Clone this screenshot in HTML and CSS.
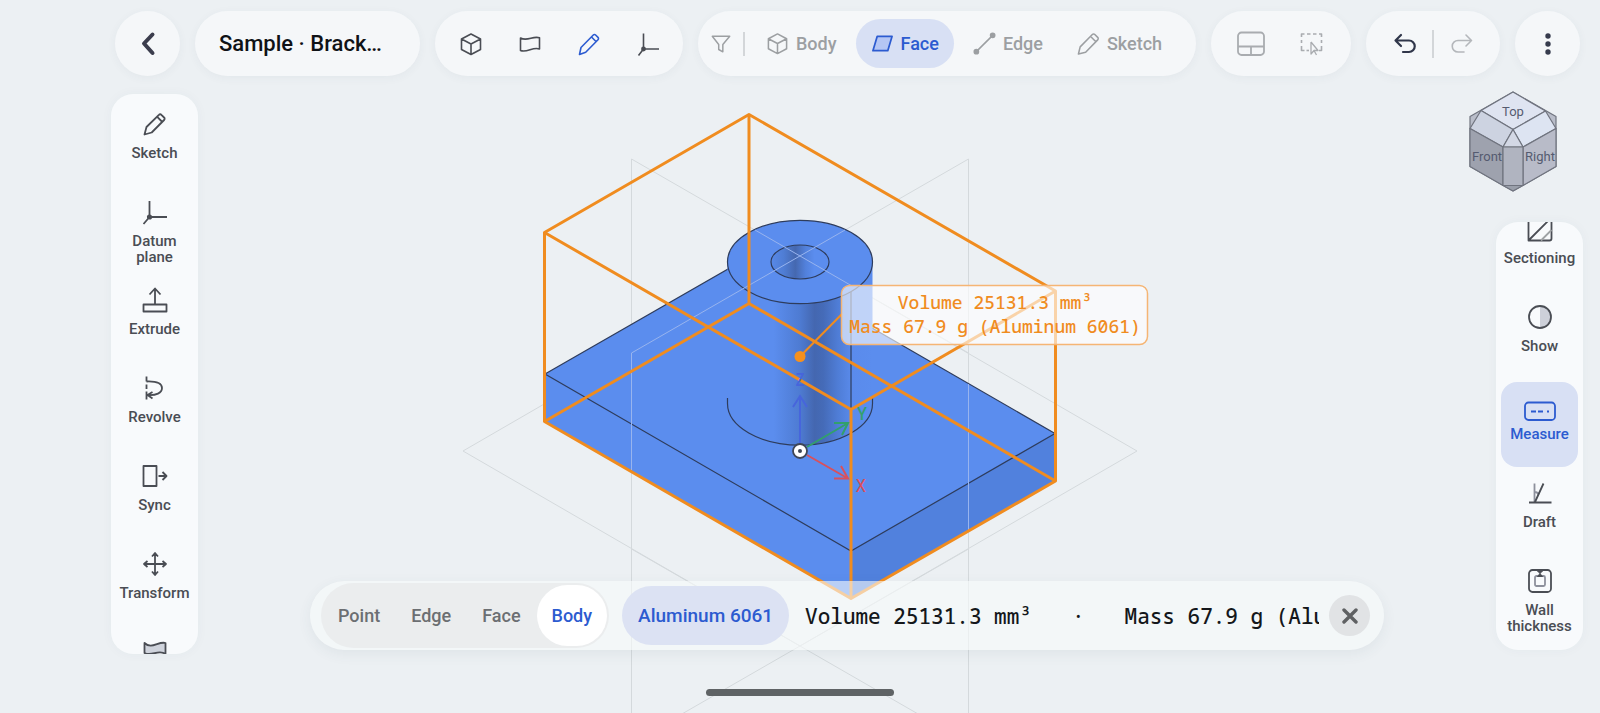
FILE: index.html
```html
<!DOCTYPE html>
<html lang="en">
<head>
<meta charset="utf-8">
<title>Sample · Bracket</title>
<meta name="viewport" content="width=device-width, initial-scale=1">
<link rel="stylesheet" href="styles.css">
</head>
<body>
<div class="app">

  <svg class="scene" viewBox="0 0 1600 713" preserveAspectRatio="xMidYMin slice" role="img" aria-label="Bracket model with bounding box">
    <defs>
      <linearGradient id="shaft" gradientUnits="userSpaceOnUse" x1="727" y1="0" x2="873" y2="0">
        <stop offset="0" stop-color="#5b8dee"/>
        <stop offset=".32" stop-color="#5b8dee"/>
        <stop offset=".5" stop-color="#4e7bd2"/>
        <stop offset=".6" stop-color="#4467b0"/>
        <stop offset=".66" stop-color="#456bb8"/>
        <stop offset=".76" stop-color="#4f7dd6"/>
        <stop offset=".86" stop-color="#5a8bec"/>
        <stop offset="1" stop-color="#5b8dee"/>
      </linearGradient>
      <linearGradient id="bore" gradientUnits="userSpaceOnUse" x1="771" y1="0" x2="829" y2="0">
        <stop offset="0" stop-color="#5889e8"/>
        <stop offset=".22" stop-color="#4f7dd4"/>
        <stop offset=".42" stop-color="#4568b0"/>
        <stop offset=".6" stop-color="#5281dc"/>
        <stop offset=".75" stop-color="#5b8dee"/>
        <stop offset="1" stop-color="#5b8dee"/>
      </linearGradient>
    </defs>

    <g class="plane">
      <path d="M463 451 800 256 1137 451 800 646Z"/>
      <path d="M631.500 159V743L968.500 549V159L631.500 353M631.500 159 968.500 353V743L631.500 549"/>
    </g>

    <path fill="#5b8dee" d="M545 374 749 257 1055 433.500V481L851 598.500 545 421Z"/>
    <path fill="#5181dd" d="M851 551 1055 433.500V481L851 598.500Z"/>
    <path class="edge" d="M545 374 749 257 1055 433.500 851 551ZM851 551V598"/>
    <path fill="url(#shaft)" d="M727.500 262V403.500A72.500 41.700 0 0 0 872.500 403.500V262Z"/>
    <path class="edge" d="M727.500 398V403.500A72.500 41.700 0 0 0 872.500 403.500V398"/>
    <ellipse class="edge cap" cx="800" cy="262" rx="72.500" ry="41.700"/>
    <ellipse class="edge bore" cx="800" cy="262" rx="29" ry="17"/>
    <path class="edge" d="M851 292V410"/>
    <path class="plane-over" d="M631.500 470V353L845 230M755 230 852 286M968.500 384V531"/>

    <g class="bounds">
      <path d="M749 114.500 1055.500 291V481L851 598.500 544.500 421.500V232.500Z"/>
      <path d="M544.500 232.500 851 409.500 1055.500 291M851 409.500V598.500M749 114.500V303.500M544.500 421.500 749 303.500 1055.500 481"/>
    </g>

    <g class="axis axis-z"><path d="M800 444V397M793 407l7-11 7 11"/><text x="800" y="386">Z</text></g>
    <g class="axis axis-y"><path d="M807 447 848 423M834 423l14 0-6 12"/><text x="862" y="420">Y</text></g>
    <g class="axis axis-x"><path d="M807 455 848 478.500M841 466l7 12.500-14 0"/><text x="861" y="492">X</text></g>
    <circle cx="800" cy="451" r="7" fill="#fff" stroke="#3f4656" stroke-width="1.800"/>
    <circle cx="800" cy="451" r="2" fill="#3f4656"/>

    <path d="M800 356.500 842 314" stroke="#f08c1f" stroke-width="2"/>
    <circle cx="800" cy="356.500" r="5.500" fill="#f5901e"/>
    <rect class="callout-box" x="841.500" y="285.500" width="306" height="59" rx="8"/>
    <text class="callout" x="995" y="309">Volume 25131.3 mm³</text>
    <text class="callout" x="995" y="333">Mass 67.9 g (Aluminum 6061)</text>
  </svg>

  <header class="topbar">
    <button class="pill round" aria-label="Back">
      <svg width="24" height="28" viewBox="0 0 24 28"><path d="M16.500 4.500 8 13.500l8.500 9.500" fill="none" stroke="#3b3d4d" stroke-width="4" stroke-linecap="round" stroke-linejoin="round"/></svg>
    </button>
    <h1 class="pill title">Sample · Brack…</h1>
    <nav class="pill tools" aria-label="Modes">
      <button aria-label="Solid"><svg class="ico" viewBox="0 0 24 24"><path d="M12 2 21.500 7v10.500L12 22.500 2.500 17.500V7ZM2.500 7 12 12l9.500-5M12 12v10.500"/></svg></button>
      <button aria-label="Surface"><svg class="ico" viewBox="0 0 24 24"><path d="M2.500 6c6.500 4 12.500-2.500 19-.2V17c-6.500-2.500-12.500 4-19 1.500Z"/></svg></button>
      <button class="on" aria-label="Sketch"><svg class="ico" viewBox="0 0 24 24"><path d="M2.500 22.500 4 15.500 16.300 3a1.600 1.600 0 0 1 2.300 0l2.400 2.400a1.600 1.600 0 0 1 0 2.300L8.700 20.200ZM14.500 5l4.700 4.700"/></svg></button>
      <button aria-label="Datum"><svg class="ico" viewBox="0 0 24 24"><path d="M7.500 1.500V17H23M7.500 17l-5 6.500"/><circle cx="7.500" cy="17" r="1.600" fill="currentColor"/></svg></button>
    </nav>
    <div class="pill filter" role="group" aria-label="Selection filter">
      <svg class="ico funnel" viewBox="0 0 24 24"><path d="M2.500 3.500h19l-7.500 9v8l-4.500-2.500v-5.500Z"/></svg>
      <span class="rule"></span>
      <button><svg class="ico" viewBox="0 0 24 24"><path d="M12 2 21.500 7v10.500L12 22.500 2.500 17.500V7ZM2.500 7 12 12l9.500-5M12 12v10.500"/></svg>Body</button>
      <button class="on" aria-pressed="true"><svg class="ico" viewBox="0 0 24 24"><path d="M6.500 4.500H22L17.500 19.500H2Z" fill="#b5c6f4" stroke-width="1.800"/></svg>Face</button>
      <button><svg class="ico" viewBox="0 0 24 24"><path d="M4 20 20 4"/><circle cx="3.500" cy="20.500" r="2.200" fill="currentColor"/><circle cx="20.500" cy="3.500" r="2.200" fill="currentColor"/></svg>Edge</button>
      <button><svg class="ico" viewBox="0 0 24 24"><path d="M1.500 23 3.300 15.500 16 2.600a1.800 1.800 0 0 1 2.600 0l3 3a1.800 1.800 0 0 1 0 2.600L9 21.200ZM14 4.500l5.700 5.700"/></svg>Sketch</button>
    </div>
    <div class="pill views">
      <button aria-label="Layout"><svg width="30" height="26" viewBox="0 0 30 26"><path d="M5.500 1.500h19a3.500 3.500 0 0 1 3.500 3.500v15.500a3.500 3.500 0 0 1-3.500 3.500h-19A3.500 3.500 0 0 1 2 20.500V5a3.500 3.500 0 0 1 3.500-3.500ZM2 15.500h26M15 15.500V24" stroke-width="1.800"/></svg></button>
      <button aria-label="Box select"><svg width="24" height="24" viewBox="0 0 24 24"><path d="M1.500 5V2h3M7 2h3.500M13 2h3.500M19 2h2.500v3M1.500 8v3M21.500 8v3M1.500 14v4.500H4.500M21.500 14v4.500H19"/><path d="M6.500 18.500H9" /><path d="M11 10v12l3-3.500 2.500 4.500M11 10l7 8.500h-4" stroke-width="1.300"/></svg></button>
    </div>
    <div class="pill history">
      <button aria-label="Undo"><svg class="ico" viewBox="0 0 24 24"><path d="M8 3 2.500 8.500 8 14M2.500 8.500H16a5.700 5.700 0 0 1 0 11.500H10" stroke-width="2.200" stroke-linecap="round"/></svg></button>
      <span class="rule"></span>
      <button class="off" aria-label="Redo"><svg class="ico" viewBox="0 0 24 24"><path d="M16 3 21.500 8.500 16 14M21.500 8.500H8A5.700 5.700 0 0 0 8 20h6" stroke-linecap="round"/></svg></button>
    </div>
    <button class="pill round" aria-label="More">
      <svg width="8" height="24" viewBox="0 0 8 24" fill="#363b4d"><circle cx="4" cy="4" r="2.700"/><circle cx="4" cy="12" r="2.700"/><circle cx="4" cy="20" r="2.700"/></svg>
    </button>
  </header>

  <svg class="viewcube" width="88" height="102" viewBox="0 0 88 102" role="img" aria-label="View cube">
    <g stroke="#70747f" stroke-width="1.200" stroke-linejoin="round">
      <path fill="#b9bdc9" d="M44 1 87 25.500V75.500L44 100 1 75.500V25.500Z"/>
      <path fill="#dfe4f1" d="M44 1 76.500 20 44 38.500 12 19.500Z"/>
      <path fill="#cdd3e1" d="M12 19.500 44 38.500 34 56 1 37.500Z"/>
      <path fill="#dde4f2" d="M76.500 20 44 38.500 54 56 87 37.500Z"/>
      <path fill="#d3d8e5" d="M44 38.500 54 56H34Z"/>
      <path fill="#9ea2ae" d="M1 37.500 34 56V94.500L1 75.500Z"/>
      <path fill="#b8bbc8" d="M87 37.500 54 56V94.500L87 75.500Z"/>
      <path fill="#b0b4c0" d="M34 56H54V94.500H34Z"/>
      <path fill="#9a9faa" d="M34 94.500H54L44 100Z"/>
    </g>
    <g class="cube-text"><text x="44" y="25">Top</text><text x="18" y="70">Front</text><text x="71" y="70">Right</text></g>
  </svg>

  <main class="stage">
    <nav class="rail" aria-label="Modeling tools">
      <button><svg viewBox="0 0 26 26"><path d="M2.500 23.500 4.500 16 16.900 3.800a1.700 1.700 0 0 1 2.500 0l2.700 2.700a1.700 1.700 0 0 1 0 2.500L9.700 21.500ZM15 5.700l5.300 5.300"/></svg><span>Sketch</span></button>
      <button><svg viewBox="0 0 26 26"><path d="M7.500 2V18H25M7.500 18l-6 7"/><circle cx="7.500" cy="18" r="1.700" fill="currentColor"/></svg><span>Datum plane</span></button>
      <button><svg viewBox="0 0 26 26"><path d="M1.500 17.500h23v7h-23ZM13 17.500V1.500M7.500 7.500 13 1.500l5.500 6"/></svg><span>Extrude</span></button>
      <button><svg viewBox="0 0 26 26"><path d="M4.500 1.500v5M4.500 9.500v4.500M4.500 16.500v8M4.500 6.500C16 6 20 9 20 13c0 5-6 7.500-14 7M10.500 17l-5 3 5 3.500"/></svg><span>Revolve</span></button>
      <button><svg viewBox="0 0 26 26"><path d="M1.500 3h13v20h-13ZM16.500 13h8M20.500 9l4 4-4 4"/></svg><span>Sync</span></button>
      <button><svg viewBox="0 0 26 26"><path d="M2.500 13h21M13 2.500v21M10 5.500l3-3.500 3 3.500M10 20.500l3 3.500 3-3.500M5.500 10 2 13l3.500 3M20.500 10l3.500 3-3.500 3"/></svg><span>Transform</span></button>
      <button aria-label="Surface"><svg viewBox="0 0 26 26"><path d="M2.500 4c7 7 14-2 21 0v11c-7-5-14 3-21-1Z" fill="#cfd3dc"/></svg></button>
    </nav>

    <section class="center">
      <div class="measure-bar">
        <div class="segments" role="group" aria-label="Measure target">
          <button>Point</button><button>Edge</button><button>Face</button><button class="on" aria-pressed="true">Body</button>
        </div>
        <button class="chip">Aluminum 6061</button>
        <p class="readout"><span>Volume 25131.3 mm³</span><span>·</span><span>Mass 67.9 g (Aluminum 6061)</span></p>
        <button class="close" aria-label="Close"><svg width="16" height="16" viewBox="0 0 16 16"><path d="M2 2 14 14M14 2 2 14" stroke="#5f6163" stroke-width="3.400" stroke-linecap="round"/></svg></button>
      </div>
    </section>

    <nav class="rail rail-right" aria-label="Inspection tools">
      <button><svg viewBox="0 0 26 26"><path d="M1.500 1.500h23v21a2 2 0 0 1-2 2h-21ZM1.500 24.500 24.500 1.500"/><path d="M14 24.500 24.500 14" stroke="#9fa3a5"/></svg><span>Sectioning</span></button>
      <button><svg viewBox="0 0 26 26"><path d="M13 2a11 11 0 0 1 0 22Z" fill="#cdd0d9" stroke="none"/><circle cx="13" cy="13" r="11"/></svg><span>Show</span></button>
      <button class="on" aria-pressed="true"><svg viewBox="0 0 26 26"><rect x="-2" y="10.500" width="30" height="17.500" rx="3.500"/><path d="M4 19.500h5M11 19.500h5M20 19.500h2"/></svg><span>Measure</span></button>
      <button><svg viewBox="0 0 26 26"><path d="M7.500 3.500V22M7.500 12c2 0 3.500 1 4 2.500" stroke="#8d909c"/><path d="M2 22.500h22.500M8 22 16.500 3.500"/></svg><span>Draft</span></button>
      <button><svg viewBox="0 0 26 26"><rect x="2" y="2" width="22" height="22" rx="3.500"/><rect x="8" y="8" width="10" height="10" rx="1.500" stroke="#8d909c"/><path d="M10.500 3h5L13 5.500ZM10.500 8.500h5L13 5.500Z" fill="currentColor" stroke-width="1"/></svg><span>Wall thickness</span></button>
    </nav>
  </main>

  <div class="home-indicator"></div>
</div>
</body>
</html>
```
FILE: styles.css
```css
* { box-sizing: border-box; }

:root {
  --ink: #4a4d54;
  --muted: #9c9fa2;
  --blue: #2c5bd0;
  --blue-tint: #d8e0f4;
  --orange: #f08c1f;
  --mono: "Noto Sans Mono", "DejaVu Sans Mono", monospace;
}

body {
  margin: 0;
  background: #ecf0f3;
  color: var(--ink);
  font-family: Roboto, "Noto Sans", sans-serif;
  font-weight: 500;
}

button {
  margin: 0;
  padding: 0;
  border: 0;
  background: none;
  color: inherit;
  font: inherit;
  cursor: pointer;
}

svg { display: block; }

.app {
  position: relative;
  display: flex;
  flex-direction: column;
  height: 100vh;
  overflow: hidden;
}

/* Model view */
.scene {
  position: absolute;
  inset: 0;
  width: 100%;
  height: 100%;
}

.plane path { fill: none; stroke: #d4d9dc; stroke-width: 1; }
.plane-over { fill: none; stroke: #98b4ee; stroke-width: 1; }
.edge { fill: none; stroke: #2e3c5c; stroke-width: 1.2; }
.cap { fill: #5b8dee; }
.bore { fill: url(#bore); }
.bounds path { fill: none; stroke: var(--orange); stroke-width: 3; stroke-linejoin: round; }
.axis path { fill: none; stroke: currentColor; stroke-width: 2; }
.axis text { fill: currentColor; font: 500 18px var(--mono); text-anchor: middle; }
.axis-x { color: #d9505c; }
.axis-y { color: #32a06c; }
.axis-z { color: #4765dc; }
.callout-box { fill: #fff; fill-opacity: .62; stroke: #f5b574; stroke-width: 1.5; }
.callout { fill: var(--orange); font: 500 18px var(--mono); text-anchor: middle; white-space: pre; }

/* Top bar */
.topbar {
  position: relative;
  display: flex;
  gap: 15px;
  padding: 11px 20px 0 115px;
}

.pill {
  display: flex;
  align-items: center;
  height: 65px;
  margin: 0;
  border-radius: 33px;
  background: rgba(248, 250, 251, .72);
  box-shadow: 0 2px 10px rgba(60, 80, 100, .05);
}

.round { flex: none; justify-content: center; width: 65px; }

.title {
  flex: 0 1 225px;
  padding-left: 24px;
  color: #0f1216;
  font-size: 22px;
  font-weight: 500;
  white-space: nowrap;
}

.ico { width: 24px; height: 24px; flex: none; }

.topbar .ico, .views svg { fill: none; stroke: currentColor; stroke-width: 1.6; stroke-linejoin: round; }

.tools { padding: 0 6px; }
.tools button { display: grid; place-items: center; width: 59px; height: 49px; }
.tools .on { color: var(--blue); }

.filter { flex: 1; gap: 4px; padding: 0 12px; color: var(--muted); font-size: 18px; }
.filter button .ico { width: 23px; height: 23px; }
.filter .funnel { width: 22px; height: 22px; }
.filter button {
  display: flex;
  align-items: center;
  flex: none;
  gap: 7px;
  height: 49px;
  padding: 0 15px;
  border-radius: 25px;
}
.filter .on { background: var(--blue-tint); color: var(--blue); }
.filter .rule { margin: 0 2px 0 7px; }

.rule { flex: none; width: 2px; height: 24px; background: #d3d6d9; }

.views { padding: 0 9px; color: #a9acb0; }
.views button { display: grid; place-items: center; width: 61px; height: 49px; }

.history { padding: 0 11px; color: #30364a; }
.history button { display: grid; place-items: center; width: 55px; height: 49px; }
.history .off { color: #b4b7bb; }
.history .rule { height: 28px; }

/* View cube */
.viewcube { position: absolute; top: 91px; right: 43px; }
.cube-text { fill: #555b70; font-size: 13px; font-weight: 400; text-anchor: middle; }

/* Side rails */
.stage {
  position: relative;
  display: flex;
  flex: 1;
  min-height: 0;
  padding: 18px 17px 59px 111px;
}

.rail {
  display: flex;
  flex: none;
  flex-direction: column;
  gap: 3px;
  width: 87px;
  padding: 7px 5px;
  border-radius: 22px;
  background: #f8fafc;
  box-shadow: 0 0 12px rgba(60, 80, 100, .04);
  overflow: hidden;
}

.rail-right { justify-content: flex-end; margin: 128px 0 4px; }

.rail button {
  display: flex;
  flex: none;
  flex-direction: column;
  align-items: center;
  gap: 8px;
  height: 85px;
  padding-top: 10px;
  border-radius: 16px;
  font-size: 15px;
  line-height: 16px;
  text-align: center;
}

.rail svg {
  width: 26px;
  height: 26px;
  flex: none;
  overflow: visible;
  fill: none;
  stroke: currentColor;
  stroke-width: 1.8;
  stroke-linejoin: round;
}

.rail .on { background: var(--blue-tint); color: var(--blue); }

/* Measure bar */
.center {
  display: flex;
  flex: 1;
  align-items: flex-end;
  justify-content: center;
  min-width: 0;
  padding-bottom: 4px;
}

.measure-bar {
  display: flex;
  align-items: center;
  width: 100%;
  max-width: 1074px;
  height: 69px;
  padding: 0 14px 0 11px;
  border-radius: 35px;
  background: rgba(249, 251, 252, .6);
  box-shadow: 0 4px 14px rgba(60, 80, 100, .07);
  font-size: 18px;
}

.segments {
  display: flex;
  flex: none;
  gap: 1px;
  padding: 2px;
  border-radius: 33px;
  background: #ebedee;
  color: #6c6f72;
}
.segments button { height: 61px; padding: 0 15px; border-radius: 31px; }
.segments .on { background: #fff; color: var(--blue); }

.chip {
  flex: none;
  height: 59px;
  margin: 0 16px 0 13px;
  padding: 0 16px;
  border-radius: 30px;
  background: #dce2f3;
  color: var(--blue);
  font-size: 19px;
}

.readout {
  display: flex;
  flex: 1;
  gap: 40px;
  min-width: 0;
  margin: 0 10px 0 0;
  overflow: hidden;
  color: #14171b;
  font: 500 21px var(--mono);
  white-space: nowrap;
}

.close {
  display: grid;
  place-items: center;
  flex: none;
  width: 41px;
  height: 41px;
  border-radius: 50%;
  background: #e1e3e5;
}

.home-indicator {
  position: absolute;
  bottom: 17px;
  left: 50%;
  width: 188px;
  height: 7px;
  margin-left: -94px;
  border-radius: 4px;
  background: #5f6365;
}
```
